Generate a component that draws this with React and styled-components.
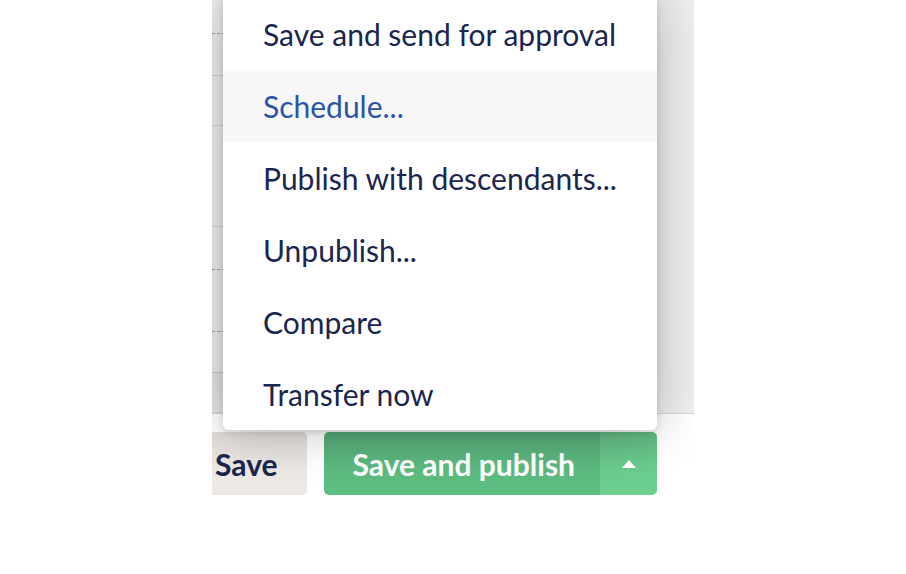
import React from 'react'
import styled, { createGlobalStyle } from 'styled-components'

const Global = createGlobalStyle`
  body {
    margin: 0;
    background: #ffffff;
    font-family: Lato, "Open Sans", sans-serif;
  }
`

const Page = styled.div`
  width: 906px;
  height: 574px;
  display: flex;
  background: #ffffff;
`

const Stage = styled.div`
  margin-left: 212px;
  width: 482px;
  height: 574px;
  display: flex;
  flex-direction: column;
  overflow: hidden;
`

const Content = styled.div`
  position: relative;
  height: 414px;
  flex-shrink: 0;
  background: #eeeeee;
  border-bottom: 1px solid #d6d6d6;
  box-sizing: border-box;
`

const Row = styled.div`
  width: 200px;
  height: ${p => p.h}px;
  box-sizing: border-box;
  border-bottom: 1px ${p => (p.dashed ? 'dashed' : 'solid')} ${p => p.line};
  background: ${p => p.bg || 'transparent'};
`

const Menu = styled.ul`
  position: absolute;
  left: 11px;
  top: -2px;
  width: 434px;
  margin: 0;
  padding: 0;
  list-style: none;
  background: #ffffff;
  border-radius: 0 0 6px 6px;
  box-shadow: 0 0 50px rgba(0, 0, 0, 0.26), 0 2px 6px rgba(0, 0, 0, 0.12);
  overflow: hidden;
  z-index: 2;
`

const Item = styled.li`
  height: 72px;
  display: flex;
  align-items: center;
  padding-left: 40px;
  font-size: 30px;
  color: ${p => (p.active ? '#2b54a5' : '#1b264f')};
  background: ${p => (p.active ? '#f7f7f7' : '#ffffff')};
  white-space: nowrap;
`

const Footer = styled.div`
  flex: 1;
  display: flex;
  justify-content: flex-end;
  align-items: flex-start;
  gap: 17px;
  padding: 18px 37px 0 0;
  background: #ffffff;
`

const Button = styled.button`
  flex-shrink: 0;
  height: 63px;
  border: none;
  border-radius: 5px;
  font-family: Lato, "Open Sans", sans-serif;
  font-weight: 700;
  font-size: 30px;
  padding: 0 29px;
  color: #1b264f;
  background: linear-gradient(180deg, #e2dcd8 0%, #ece8e4 60%, #ede9e6 100%);
`

const Split = styled.div`
  flex-shrink: 0;
  display: flex;
  height: 63px;
  border-radius: 5px;
  overflow: hidden;
`

const Primary = styled.button`
  border: none;
  padding: 0 25px 0 29px;
  font-family: Lato, "Open Sans", sans-serif;
  font-weight: 700;
  font-size: 30px;
  color: #ffffff;
  background: linear-gradient(180deg, #56a877 0%, #5cb97f 55%, #5fbf83 100%);
`

const Caret = styled.button`
  width: 57px;
  border: none;
  display: flex;
  align-items: center;
  justify-content: center;
  background: linear-gradient(180deg, #63b883 0%, #6acb8d 55%, #6cd08f 100%);
`

const rows = [
  { h: 34, line: '#9a9a9a', dashed: true },
  { h: 42, line: '#cfcfcf' },
  { h: 50, line: '#d4d4d4' },
  { h: 101, line: '#d4d4d4' },
  { h: 43, line: '#9a9a9a', dashed: true },
  { h: 62, line: '#9a9a9a', dashed: true },
  { h: 41, line: '#c4c4c4' },
  { h: 40, line: '#d6d6d6', bg: '#e4e4e4' },
]

const items = [
  'Save and send for approval',
  'Schedule...',
  'Publish with descendants...',
  'Unpublish...',
  'Compare',
  'Transfer now',
]

const App = () => {
  return (
    <Page>
      <Global />
      <Stage>
        <Content>
          {rows.map((r, i) => (
            <Row key={i} h={r.h} line={r.line} dashed={r.dashed} bg={r.bg} />
          ))}
          <Menu>
            {items.map((label, i) => (
              <Item key={label} active={i === 1}>
                {label}
              </Item>
            ))}
          </Menu>
        </Content>
        <Footer>
          <Button>Save</Button>
          <Split>
            <Primary>Save and publish</Primary>
            <Caret>
              <svg width="14" height="8" viewBox="0 0 14 8">
                <path d="M0 8 L7 0 L14 8 Z" fill="#ffffff" />
              </svg>
            </Caret>
          </Split>
        </Footer>
      </Stage>
    </Page>
  )
}

export default App
